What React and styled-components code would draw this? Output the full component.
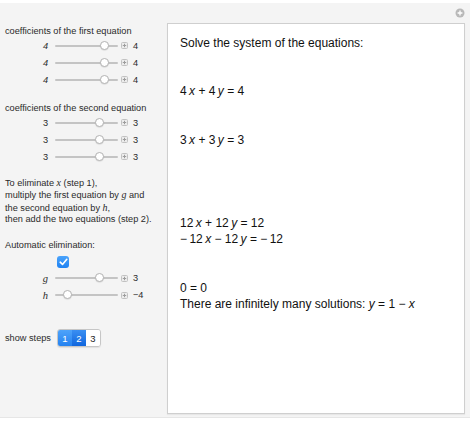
import React from "react";
import styled, { createGlobalStyle } from "styled-components";

const GlobalStyle = createGlobalStyle`
  html, body {
    margin: 0;
    padding: 0;
    background: #ffffff;
  }
  body {
    font-family: "Liberation Sans", Arial, sans-serif;
  }
`;

const Frame = styled.div`
  width: 470px;
  height: 415px;
  margin-top: 3px;
  background: #f4f4f4;
  display: flex;
  border-bottom: 1px solid #e6e6e6;
  box-sizing: border-box;
`;

const Controls = styled.div`
  width: 167px;
  padding-top: 23px;
  display: flex;
  flex-direction: column;
  font-size: 9.2px;
  color: #2a2a2a;
`;

const Heading = styled.div`
  padding-left: 5px;
  line-height: 11px;
  margin-top: ${({ $top }) => $top || 0}px;
  white-space: nowrap;
`;

const Note = styled.div`
  padding-left: 5px;
  margin-top: 12px;
  line-height: 11.4px;
  white-space: nowrap;
  i {
    font-family: "Liberation Serif", serif;
    font-size: 10px;
  }
`;

const Row = styled.div`
  display: flex;
  align-items: center;
  height: ${({ $h }) => $h || 17}px;
`;

const Label = styled.div`
  width: 48px;
  text-align: right;
  font-style: ${({ $italic }) => ($italic ? "italic" : "normal")};
  font-family: ${({ $serif }) =>
    $serif ? '"Liberation Serif", serif' : '"Liberation Sans", Arial, sans-serif'};
  font-size: ${({ $serif }) => ($serif ? "10.5px" : "9.2px")};
`;

const Track = styled.div`
  position: relative;
  width: 63px;
  height: 2px;
  margin-left: 7px;
  background: #c4c4c4;
  border-radius: 1px;
`;

const Thumb = styled.div`
  position: absolute;
  top: -4px;
  width: 9px;
  height: 9px;
  margin-left: -4.5px;
  border-radius: 50%;
  background: #ffffff;
  border: 1px solid #b5b5b5;
  box-sizing: border-box;
  box-shadow: 0 0.5px 1px rgba(0, 0, 0, 0.15);
`;

const PlusBox = styled.svg`
  margin-left: 3px;
  flex: none;
`;

const Value = styled.div`
  margin-left: 5px;
`;

const CheckRow = styled.div`
  height: 16px;
  display: flex;
  align-items: center;
  padding-left: 57px;
  margin-top: 3px;
`;

const Check = styled.div`
  width: 12px;
  height: 12px;
  border-radius: 3px;
  background: linear-gradient(#4aa3fb, #1f82f2);
  display: flex;
  align-items: center;
  justify-content: center;
`;

const StepsRow = styled.div`
  display: flex;
  align-items: center;
  padding-left: 5px;
  margin-top: 26px;
  height: 17px;
`;

const Segments = styled.div`
  display: flex;
  margin-left: 6px;
  border-radius: 3px;
  overflow: hidden;
  border: 1px solid #c6c6c6;
  box-shadow: 0 1px 1px rgba(0, 0, 0, 0.08);
`;

const Segment = styled.div`
  width: 14px;
  height: 16px;
  display: flex;
  align-items: center;
  justify-content: center;
  font-size: 9.5px;
  color: ${({ $on }) => ($on ? "#ffffff" : "#222222")};
  background: ${({ $on, $dark }) =>
    $on
      ? $dark
        ? "linear-gradient(#3a8ff2, #1167de)"
        : "linear-gradient(#4ea3fa, #2582f0)"
      : "#ffffff"};
`;

const Side = styled.div`
  flex: 1;
  display: flex;
  flex-direction: column;
  padding-right: 5px;
  padding-bottom: 3px;
`;

const TopBar = styled.div`
  height: 20px;
  display: flex;
  align-items: center;
  justify-content: flex-end;
  padding-bottom: 1px;
  box-sizing: border-box;
`;

const Panel = styled.div`
  flex: 1;
  background: #ffffff;
  border: 1px solid #cfcfcf;
  box-shadow: 0 1px 1px rgba(0, 0, 0, 0.05);
  padding: 11px 12px 0;
  font-size: 12px;
  color: #111111;
`;

const Line = styled.div`
  line-height: 16px;
  margin-top: ${({ $top }) => $top || 0}px;
  white-space: nowrap;
  i {
    font-style: italic;
  }
`;

const PlusIcon = () => (
  <PlusBox width="7" height="7" viewBox="0 0 7 7">
    <rect x="0.5" y="0.5" width="6" height="6" rx="1" fill="#ececec" stroke="#c2c2c2" />
    <path d="M3.5 1.8v3.4M1.8 3.5h3.4" stroke="#9c9c9c" strokeWidth="1" />
  </PlusBox>
);

const Slider = ({ label, value, pos, italic, serif }) => (
  <Row $h={17}>
    <Label $italic={italic} $serif={serif}>
      {label}
    </Label>
    <Track>
      <Thumb style={{ left: `${pos * 100}%` }} />
    </Track>
    <PlusIcon />
    <Value>{value}</Value>
  </Row>
);

const Eq = ({ parts }) => (
  <>
    {parts.map((p, i) =>
      p.v ? <i key={i}>{p.v}</i> : <span key={i}>{p}</span>
    )}
  </>
);

const App = () => {
  return (
    <>
      <GlobalStyle />
      <Frame>
        <Controls>
          <Heading>coefficients of the first equation</Heading>
          <Slider label="4" value="4" pos={0.78} italic />
          <Slider label="4" value="4" pos={0.78} italic />
          <Slider label="4" value="4" pos={0.78} italic />

          <Heading $top={15}>coefficients of the second equation</Heading>
          <Slider label="3" value="3" pos={0.71} />
          <Slider label="3" value="3" pos={0.71} />
          <Slider label="3" value="3" pos={0.71} />

          <Note>
            To eliminate <i>x</i> (step 1),
            <br />
            multiply the first equation by <i>g</i> and
            <br />
            the second equation by <i>h</i>,
            <br />
            then add the two equations (step 2).
          </Note>

          <Heading $top={14}>Automatic elimination:</Heading>
          <CheckRow>
            <Check>
              <svg width="9" height="8" viewBox="0 0 9 8">
                <path
                  d="M1.2 4.2L3.5 6.4L7.8 1.3"
                  fill="none"
                  stroke="#ffffff"
                  strokeWidth="1.6"
                  strokeLinecap="round"
                  strokeLinejoin="round"
                />
              </svg>
            </Check>
          </CheckRow>
          <Slider label="g" value="3" pos={0.71} italic serif />
          <Slider label="h" value="−4" pos={0.2} italic serif />

          <StepsRow>
            show steps
            <Segments>
              <Segment $on>1</Segment>
              <Segment $on $dark>2</Segment>
              <Segment>3</Segment>
            </Segments>
          </StepsRow>
        </Controls>

        <Side>
          <TopBar>
            <svg width="10" height="10" viewBox="0 0 10 10">
              <circle cx="5" cy="5" r="4.5" fill="#b9b9b9" />
              <path d="M5 2.6v4.8M2.6 5h4.8" stroke="#ffffff" strokeWidth="1.3" />
            </svg>
          </TopBar>
          <Panel>
            <Line>Solve the system of the equations:</Line>
            <Line $top={32}>
              <Eq parts={["4\u2009", { v: "x" }, " + 4\u2009", { v: "y" }, " = 4"]} />
            </Line>
            <Line $top={33}>
              <Eq parts={["3\u2009", { v: "x" }, " + 3\u2009", { v: "y" }, " = 3"]} />
            </Line>
            <Line $top={67}>
              <Eq parts={["12\u2009", { v: "x" }, " + 12\u2009", { v: "y" }, " = 12"]} />
            </Line>
            <Line>
              <Eq
                parts={["\u2212\u200912\u2009", { v: "x" }, " \u2212 12\u2009", { v: "y" }, " = \u2212\u200912"]}
              />
            </Line>
            <Line $top={33}>0 = 0</Line>
            <Line>
              There are infinitely many solutions: <i>y</i> = 1 − <i>x</i>
            </Line>
          </Panel>
        </Side>
      </Frame>
    </>
  );
};

export default App;
